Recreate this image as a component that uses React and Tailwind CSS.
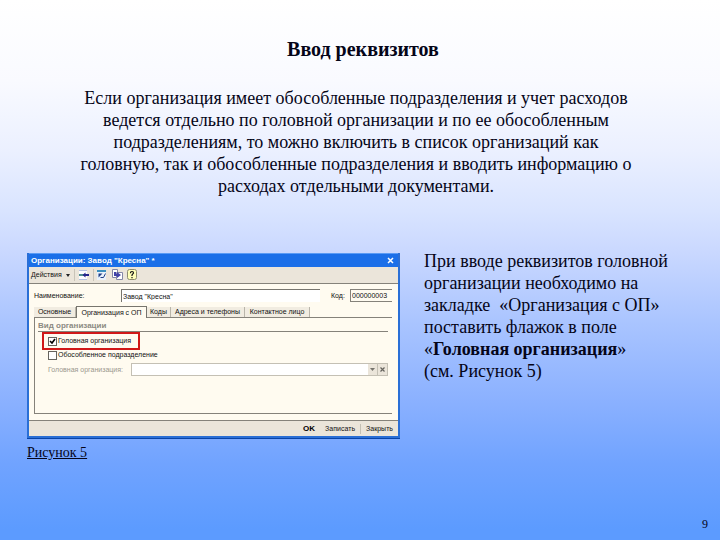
import React, { useState } from "react";

const tabs = [
  { name: "Основные", width: "w-[42px]" },
  { name: "Организация с ОП", width: "w-[71px]" },
  { name: "Коды", width: "w-6" },
  { name: "Адреса и телефоны", width: "w-[74px]" },
  { name: "Контактное лицо", width: "w-[65px]" },
];

const ListIcon = () => (
  <svg viewBox="0 0 12 12" className="w-3 h-3" aria-hidden="true">
    <path d="M1 1h8v10H1z" fill="#fdfdff" />
    <path d="M1 1.5h8M1 10.5h8" stroke="#b4c0e0" />
    <path d="M1 5h5v2H1z" fill="#4f8f90" />
    <path d="M4.500 6l3-2.500v1.500H11v2H7.500v1.500z" fill="#26268c" />
  </svg>
);

const RefreshIcon = () => (
  <svg viewBox="0 0 12 12" className="w-3 h-3" aria-hidden="true">
    <path d="M0 1h9v10H0z" fill="#e8f1fb" />
    <path d="M0 1h9v2H0z" fill="#3a8fc0" />
    <path d="M1.500 4.500h4l-4 4z" fill="#1f3f86" />
    <path d="M3.500 8.500h3l2-4" stroke="#1f3f86" fill="none" />
  </svg>
);

const CopyIcon = () => (
  <svg viewBox="0 0 12 12" className="w-3 h-3" aria-hidden="true">
    <path d="M0.500 0.500h5v8h-5z" fill="#fff" stroke="#8487a6" />
    <path d="M4.500 3.500h6v7h-6z" fill="#fff" stroke="#8487a6" />
    <path d="M2 3v4h3v2l4-3-4-3v2H4V3z" fill="#4242a8" />
  </svg>
);

const HelpIcon = () => (
  <svg viewBox="0 0 12 12" className="w-3 h-3" aria-hidden="true">
    <rect x="0.5" y="0.5" width="9" height="10" rx="2" fill="#ffffb8" stroke="#8d8c70" />
    <path d="M3.500 4.200q0-1.700 1.500-1.700t1.500 1.500L5 6v1M5 8v1.200" stroke="#111" strokeWidth="1.2" fill="none" />
  </svg>
);

function Check({ checked, onChange }) {
  return (
    <span className="grid">
      <input
        type="checkbox"
        checked={checked}
        onChange={(e) => onChange(e.target.checked)}
        className="col-start-1 row-start-1 h-[9px] w-[9px] appearance-none border border-[#66645e] bg-white"
      />
      {checked && (
        <svg viewBox="0 0 9 9" className="pointer-events-none col-start-1 row-start-1 h-[9px] w-[9px]" aria-hidden="true">
          <path d="M2 4l2 2 3-4" stroke="#000" strokeWidth="1.6" fill="none" />
        </svg>
      )}
    </span>
  );
}

function OrganizationWindow() {
  const [active, setActive] = useState("Организация с ОП");
  const [head, setHead] = useState(true);
  const [separate, setSeparate] = useState(false);

  return (
    <div className="border-x-2 border-b-2 border-[#2a6fd6] shadow-[0_1px_0_#0a45a8] bg-[#fffbf0] font-['Liberation_Sans',sans-serif] text-[7px] leading-[10px] text-[#111]">
      {/* Title bar */}
      <div className="flex h-[14px] items-center justify-between border-t border-[#5a9bf5] bg-[#1b6fe8] px-0.5 text-white">
        <h2 className="whitespace-nowrap text-[8px] font-bold">Организации: Завод "Кресна" *</h2>
        <button type="button" aria-label="Закрыть окно" className="px-0.5">
          <svg viewBox="0 0 7 7" className="w-[7px] h-[7px]" aria-hidden="true">
            <path d="M1 1l5 5M6 1L1 6" stroke="#fff" strokeWidth="1.5" />
          </svg>
        </button>
      </div>

      {/* Toolbar */}
      <div className="flex h-[17px] items-center border-b border-[#85827a] bg-[#ebe5da] px-0.5">
        <button type="button" className="flex w-10 items-center gap-1">
          Действия
          <svg viewBox="0 0 4 3" className="w-1 h-[3px]" aria-hidden="true">
            <path d="M0 0h4L2 3z" fill="#222" />
          </svg>
        </button>
        <span className="mx-[3px] h-3 w-px bg-[#c9c4b8]" />
        <button type="button" aria-label="Список"><ListIcon /></button>
        <span className="mx-[3px] h-3 w-px bg-[#c9c4b8]" />
        <div className="flex gap-[3px]">
          <button type="button" aria-label="Обновить"><RefreshIcon /></button>
          <button type="button" aria-label="Скопировать"><CopyIcon /></button>
          <button type="button" aria-label="Справка"><HelpIcon /></button>
        </div>
      </div>

      <div className="pl-[5px] pr-1.5 pt-[5px] pb-1.5">
        <div className="flex items-center">
          <label htmlFor="name" className="w-[87px] shrink-0">Наименование:</label>
          <input
            id="name"
            defaultValue={'Завод "Кресна"'}
            className="h-[13px] w-0 grow border-l border-t border-[#77756e] bg-white px-px outline-none"
          />
          <label htmlFor="code" className="ml-[11px] w-[19px] shrink-0">Код:</label>
          <input
            id="code"
            defaultValue="000000003"
            className="h-[13px] w-[42px] border-y border-l border-[#85827a] bg-transparent px-px outline-none"
          />
        </div>

        {/* Tabs */}
        <div className="mt-1 flex items-end" role="tablist">
          {tabs.map((tab) => (
            <button
              key={tab.name}
              type="button"
              role="tab"
              aria-selected={active === tab.name}
              onClick={() => setActive(tab.name)}
              className={`${tab.width} whitespace-nowrap border-r text-center ${
                active === tab.name
                  ? "relative z-10 -mb-px h-3 border-l border-t border-[#77756e] bg-[#fffbf0]"
                  : "h-2.5 border-[#b9b5aa] bg-[#f1ece1]"
              }`}
            >
              {tab.name}
            </button>
          ))}
        </div>

        <div className="h-[97px] border-y border-l border-[#85827a] pl-[3px] pr-1 pt-[3px]">
          <div className="border-b border-[#85827a] text-[8px] font-bold text-[#8c8a82]">Вид организации</div>
          <div className="ml-1 flex h-[18px] w-[98px] items-center border-2 border-[#d01818] pl-1">
            <label className="flex items-center gap-px whitespace-nowrap">
              <Check checked={head} onChange={setHead} />
              Головная организация
            </label>
          </div>
          <label className="ml-2.5 flex items-center gap-px whitespace-nowrap">
            <Check checked={separate} onChange={setSeparate} />
            Обособленное подразделение
          </label>
          <div className="ml-2.5 mt-[3px] flex items-center">
            <label htmlFor="head" className="w-[83px] shrink-0 whitespace-nowrap text-[#9a978e]">
              Головная организация:
            </label>
            <div className="flex h-[13px] min-w-0 grow border border-[#c4c0b4] bg-white">
              <input id="head" disabled className="w-0 grow" />
              <button type="button" aria-label="Выбрать" className="flex w-[9px] items-center justify-center bg-[#ebe5da]">
                <svg viewBox="0 0 5 3" className="w-[5px] h-[3px]" aria-hidden="true">
                  <path d="M0 0h5L2.500 3z" fill="#77756e" />
                </svg>
              </button>
              <button type="button" aria-label="Очистить" className="flex w-[10px] items-center justify-center border-l border-[#c4c0b4] bg-[#ebe5da]">
                <svg viewBox="0 0 5 5" className="w-[5px] h-[5px]" aria-hidden="true">
                  <path d="M0.500 0.500l4 4M4.500 0.500l-4 4" stroke="#66645e" strokeWidth="1.2" />
                </svg>
              </button>
            </div>
          </div>
        </div>
      </div>

      {/* Bottom buttons */}
      <div className="flex h-4 items-center justify-end border-t border-[#85827a] bg-[#ebe5da] pr-[5px]">
        <button type="button" className="text-[8px] font-bold text-black">OK</button>
        <button type="button" className="ml-2.5 border-r border-[#c4c0b4] pr-[5px]">Записать</button>
        <button type="button" className="ml-[5px]">Закрыть</button>
      </div>
    </div>
  );
}

export default function App() {
  return (
    <main className="flex min-h-screen flex-col bg-[linear-gradient(to_bottom,#ffffff_0%,#f9faff_15%,#ebf0ff_28%,#d9e4ff_39%,#cbd9ff_46%,#a9c4ff_60%,#8bb1ff_74%,#70a3ff_86%,#5c9bff_98%)] font-['Liberation_Serif',serif] text-[18px] leading-[22px] text-[#050518]">
      <h1 className="pl-1.5 pt-[38px] text-center text-[20px] font-bold">Ввод реквизитов</h1>

      <p className="mt-[27px] pr-2 text-center">
        Если организация имеет обособленные подразделения и учет расходов
        <br />
        ведется отдельно по головной организации и по ее обособленным
        <br />
        подразделениям, то можно включить в список организаций как
        <br />
        головную, так и обособленные подразделения и вводить информацию о
        <br />
        расходах отдельными документами.
      </p>

      <div className="mt-[53px] grid grid-cols-[minmax(0,373fr)_minmax(0,296fr)] items-start gap-6 pl-[27px]">
        <figure className="pt-[3px]">
          <OrganizationWindow />
          <figcaption className="mt-1 text-[14px] underline">Рисунок 5</figcaption>
        </figure>
        <p>
          При вводе реквизитов головной
          <br />
          организации необходимо на
          <br />
          закладке &nbsp;«Организация с ОП»
          <br />
          поставить флажок в поле
          <br />
          «<b>Головная организация</b>»
          <br />
          (см. Рисунок 5)
        </p>
      </div>

      <footer className="mt-auto pb-[5px] pr-3 text-right text-[12px]">9</footer>
    </main>
  );
}
